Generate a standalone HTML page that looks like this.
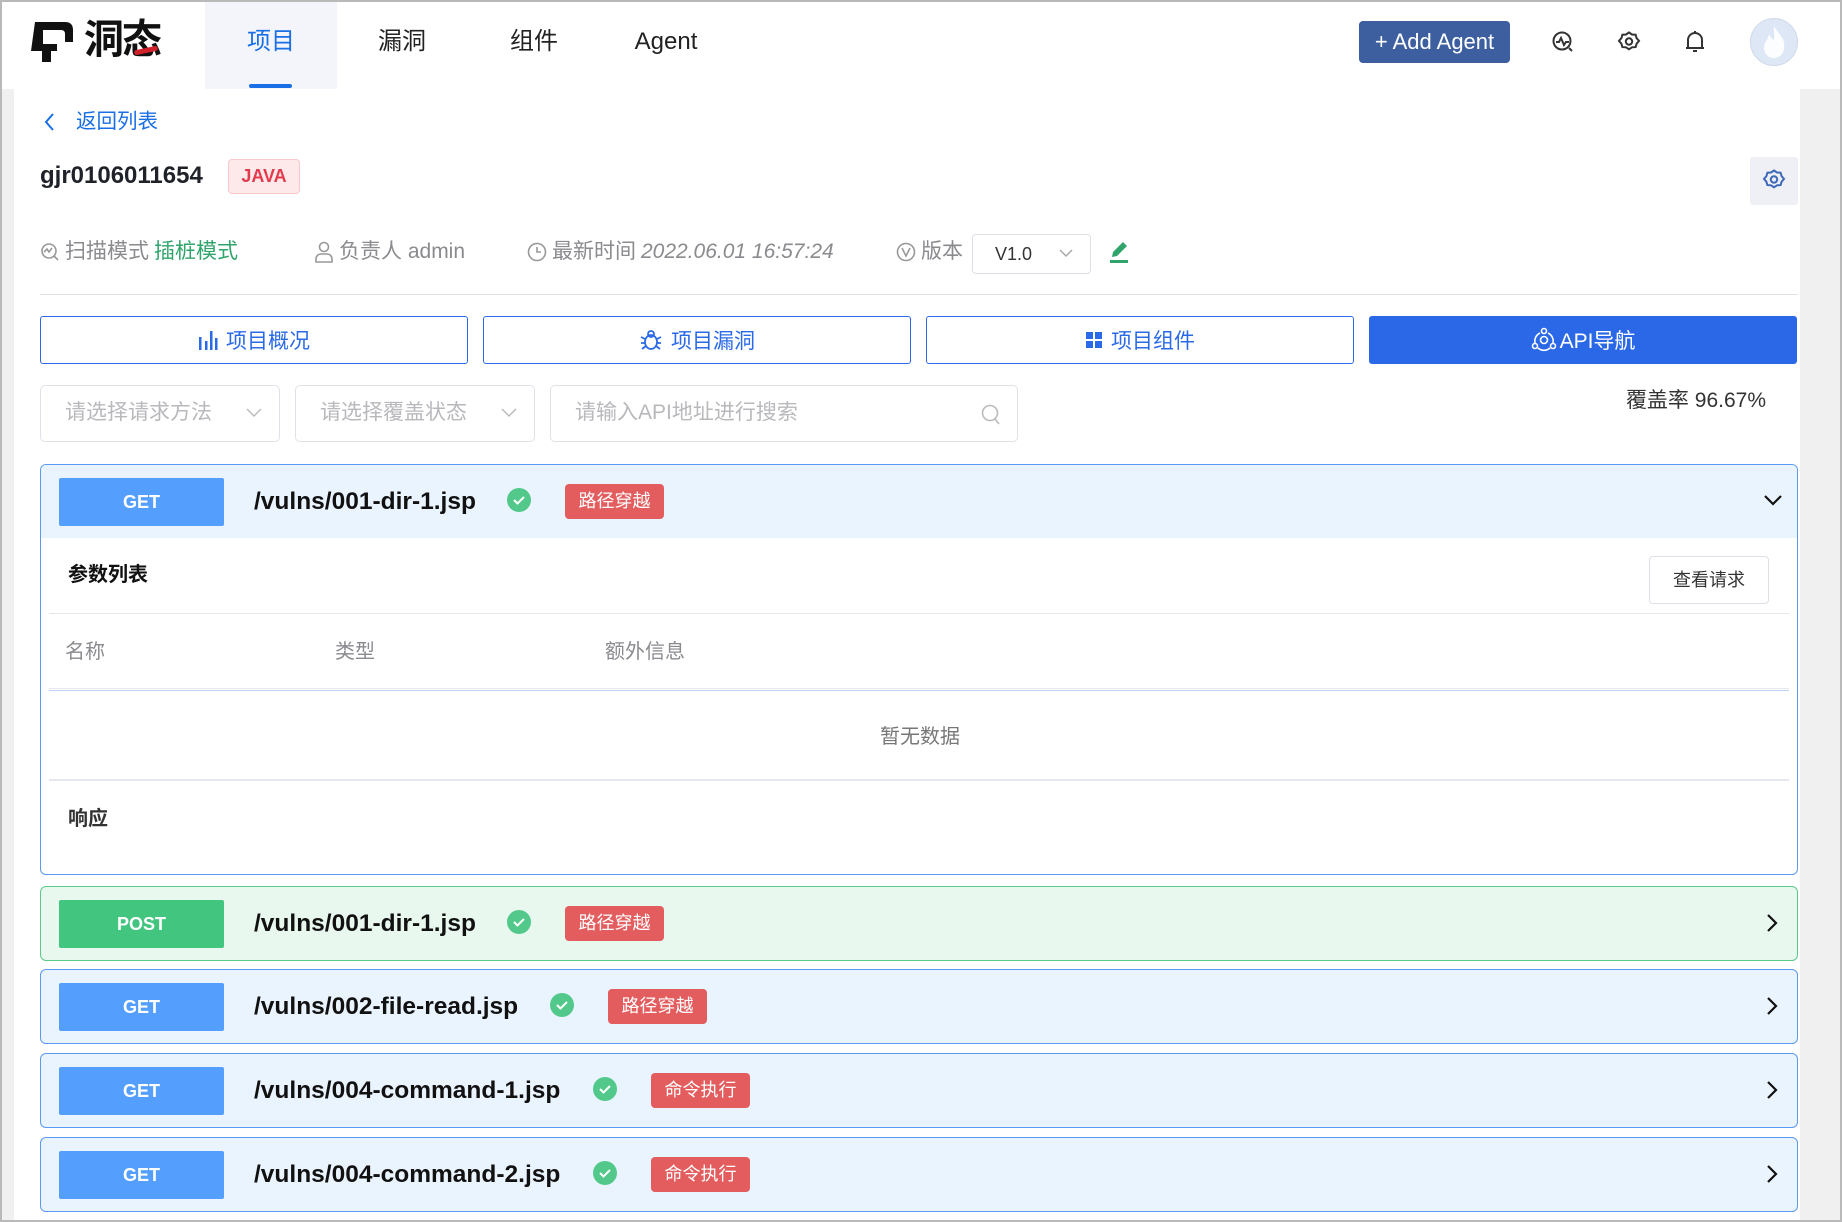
<!DOCTYPE html>
<html><head><meta charset="utf-8">
<style>
*{margin:0;padding:0;box-sizing:border-box}
body{width:1842px;height:1222px;position:relative;overflow:hidden;background:#f0f0f0;font-family:"Liberation Sans","Noto Sans CJK SC",sans-serif;color:#1f2329}
.a{position:absolute}
.frame{left:0;top:0;width:1842px;height:1222px;border:2px solid #b9b9b9;border-bottom:none;pointer-events:none}
.hdr{left:0;top:0;width:1842px;height:89px;background:#fff}
.nav{top:0;height:89px;width:132px;text-align:center;line-height:84px;font-size:24px;color:#222}
.main{left:14px;top:89px;width:1786px;height:1131px;background:#fff}
.tabb{top:316px;height:48px;width:428px;border:1.5px solid #2a6ae9;border-radius:3px;color:#2a6ae9;font-size:21px;display:flex;align-items:center;justify-content:center;gap:8px;background:#fff}
.sel{top:385px;height:57px;border:1.5px solid #e0e2e8;border-radius:5px;color:#b8b8bd;font-size:21px;padding-left:24px;line-height:54px}
.row{left:40px;width:1758px;height:75px;border:1.5px solid #5b9af0;border-radius:6px;background:#eaf4ff}
.badge{left:18px;top:13px;width:165px;height:48px;background:#549ffe;color:#fff;font-weight:bold;font-size:18px;text-align:center;line-height:48px;border-radius:2px}
.path{left:213px;top:0;line-height:73px;font-size:24.5px;font-weight:bold;color:#111}
.tag{top:19px;height:35px;width:99px;background:#e35d5f;color:#fff;font-size:18px;text-align:center;line-height:35px;border-radius:4px}
.chk{top:23px;width:24px;height:24px;border-radius:50%;background:#52c98a}
.chev{right:14px;top:26px}
.meta{top:240px;font-size:21px;color:#8a8a8f;line-height:24px;display:flex;align-items:center;gap:5px}
</style></head><body>
<div class="a hdr"></div>
<svg class="a" style="left:29px;top:20px" width="46" height="44" viewBox="0 0 46 44"><path d="M6 2 H36 Q44 2 44 10 V22 H36 V14 Q36 10 32 10 H14 V24 H28 V31 H22 V42 H13 V31 H2 Z" fill="#111"/></svg>
<div class="a" style="left:84px;top:14px;font-size:40px;font-weight:bold;color:#111;letter-spacing:-2px;line-height:52px">洞<span style="position:relative">态<span style="position:absolute;left:12px;top:30px;width:24px;height:5px;background:#d0202a;border-radius:3px;transform:rotate(-12deg)"></span></span></div>
<div class="a" style="left:205px;top:2px;width:132px;height:87px;background:#f4f5fa"></div>
<div class="a nav" style="left:205px;color:#1a6fe6">项目</div>
<div class="a" style="left:249px;top:84px;width:43px;height:4px;background:#1a6fe6;border-radius:2px"></div>
<div class="a nav" style="left:336px">漏洞</div>
<div class="a nav" style="left:468px">组件</div>
<div class="a nav" style="left:600px">Agent</div>
<div class="a" style="left:1359px;top:21px;width:151px;height:42px;background:#3d5fa0;border-radius:4px;color:#fff;font-size:22px;line-height:42px;text-align:center">+ Add Agent</div>
<svg class="a" style="left:1551px;top:30px" width="24" height="24" viewBox="0 0 24 24" fill="none" stroke="#333" stroke-width="2"><circle cx="11" cy="11" r="8.5"/><path d="M5 12h3l2-4 3 7 2-3h3M18 18l3 3"/></svg>
<svg class="a" style="left:1617px;top:30px" width="24" height="24" viewBox="0 0 24 24" fill="none" stroke="#333" stroke-width="2"><path d="M12 2.5l3 2 3.6.2 1 3.4 2.4 2.8-2.4 2.8-1 3.4-3.6.2-3 2-3-2-3.6-.2-1-3.4L2 10.9l2.4-2.8 1-3.4L9 4.5z"/><circle cx="12" cy="11.5" r="3.2"/></svg>
<svg class="a" style="left:1683px;top:29px" width="24" height="26" viewBox="0 0 24 26" fill="none" stroke="#333" stroke-width="2"><path d="M5 19V11a7 7 0 0114 0v8M3 19h18M12 2v2M10 22h4"/></svg>
<div class="a" style="left:1750px;top:18px;width:48px;height:48px;border-radius:50%;background:#dde7f5;border:1px solid #cfd9ea"></div>
<svg class="a" style="left:1760px;top:24px" width="28" height="36" viewBox="0 0 28 36"><path d="M14 2C18 10 26 14 24 24a10 10 0 01-20 0C4 18 8 16 9 10c2 4 3 5 5 6C15 10 13 6 14 2z" fill="#fff" opacity=".9"/></svg>
<div class="a main"></div>
<svg class="a" style="left:43px;top:112px" width="12" height="20" viewBox="0 0 12 20" fill="none" stroke="#1a6fe6" stroke-width="2"><path d="M10 2L3 10l7 8"/></svg>
<div class="a" style="left:76px;top:109px;font-size:20.5px;color:#1a6fe6;line-height:26px">返回列表</div>
<div class="a" style="left:40px;top:160px;font-size:24px;font-weight:bold;color:#1f2329;line-height:32px">gjr0106011654</div>
<div class="a" style="left:228px;top:159px;width:72px;height:35px;background:#fde9ea;border:1px solid #f9c9cc;border-radius:4px;color:#e33b4d;font-weight:bold;font-size:18px;text-align:center;line-height:33px">JAVA</div>
<div class="a" style="left:1750px;top:157px;width:48px;height:48px;background:#eef0f5;border-radius:3px"></div>
<svg class="a" style="left:1762px;top:168px" width="24" height="24" viewBox="0 0 24 24" fill="none" stroke="#3d68b8" stroke-width="2"><path d="M12 2.5l3 2 3.6.2 1 3.4 2.4 2.8-2.4 2.8-1 3.4-3.6.2-3 2-3-2-3.6-.2-1-3.4L2 10.9l2.4-2.8 1-3.4L9 4.5z"/><circle cx="12" cy="11.5" r="3.2"/></svg>
<div class="a meta" style="left:40px"><svg width="20" height="20" viewBox="0 0 20 20" fill="none" stroke="#999" stroke-width="1.6"><circle cx="9" cy="9" r="7"/><path d="M4 10l3-3 2 3 3-4M14 14l4 4"/></svg>扫描模式 <span style="color:#2fa56b">插桩模式</span></div>
<div class="a meta" style="left:314px"><svg width="20" height="22" viewBox="0 0 20 22" fill="none" stroke="#999" stroke-width="1.6"><circle cx="10" cy="6" r="4.5"/><path d="M2 21v-3a5 5 0 015-5h6a5 5 0 015 5v3z"/></svg>负责人 admin</div>
<div class="a meta" style="left:527px"><svg width="20" height="20" viewBox="0 0 20 20" fill="none" stroke="#999" stroke-width="1.6"><circle cx="10" cy="10" r="8.5"/><path d="M10 5v5h4"/></svg>最新时间 <i>2022.06.01 16:57:24</i></div>
<div class="a meta" style="left:896px"><svg width="20" height="20" viewBox="0 0 20 20" fill="none" stroke="#999" stroke-width="1.6"><circle cx="10" cy="10" r="8.5"/><path d="M6 6l4 8 4-8"/></svg>版本</div>
<div class="a" style="left:972px;top:234px;width:119px;height:40px;border:1px solid #dcdfe6;border-radius:4px;font-size:18px;color:#333;line-height:38px;padding-left:22px">V1.0<svg style="position:absolute;left:86px;top:14px" width="14" height="9" viewBox="0 0 14 9" fill="none" stroke="#aaa" stroke-width="1.5"><path d="M1 1l6 6 6-6"/></svg></div>
<svg class="a" style="left:1109px;top:240px" width="20" height="24" viewBox="0 0 20 24"><path d="M14 2l4 4-10 10-5 1 1-5z" fill="#2fa56b"/><rect x="1" y="20" width="18" height="3" fill="#2fa56b"/></svg>
<div class="a" style="left:40px;top:294px;width:1758px;height:1px;background:#e3e3e6"></div>
<div class="a tabb" style="left:40px"><svg width="20" height="22" viewBox="0 0 20 22" fill="#2a6ae9"><rect x="1" y="8" width="2.5" height="13"/><rect x="7" y="12" width="2.5" height="9"/><rect x="12" y="2" width="2.5" height="19"/><rect x="17" y="9" width="2.5" height="12"/></svg>项目概况</div>
<div class="a tabb" style="left:483px"><svg width="24" height="24" viewBox="0 0 24 24" fill="none" stroke="#2a6ae9" stroke-width="1.8"><ellipse cx="12" cy="14" rx="6" ry="7"/><circle cx="12" cy="6" r="3"/><path d="M2 9l4 2M2 15h4M3 21l4-3M22 9l-4 2M22 15h-4M21 21l-4-3"/></svg>项目漏洞</div>
<div class="a tabb" style="left:926px"><svg width="18" height="18" viewBox="0 0 18 18" fill="#2a6ae9"><rect x="1" y="1" width="7" height="7"/><rect x="10" y="1" width="7" height="7"/><rect x="1" y="10" width="7" height="7"/><rect x="10" y="10" width="7" height="7"/></svg>项目组件</div>
<div class="a tabb" style="left:1369px;background:#2a68e8;border-color:#2a68e8;color:#fff;gap:3px"><svg width="26" height="26" viewBox="0 0 26 26" fill="none" stroke="#fff" stroke-width="1.6"><circle cx="13" cy="13" r="3.5"/><circle cx="13" cy="4" r="2.5"/><circle cx="4" cy="19" r="2.5"/><circle cx="22" cy="19" r="2.5"/><path d="M9 6a9 9 0 00-5 10M17 6a9 9 0 015 10M7 21a9 9 0 0012 0"/></svg>API导航</div>
<div class="a sel" style="left:40px;width:240px">请选择请求方法<svg style="position:absolute;left:205px;top:22px" width="16" height="10" viewBox="0 0 16 10" fill="none" stroke="#bbb" stroke-width="1.5"><path d="M1 1l7 7 7-7"/></svg></div>
<div class="a sel" style="left:295px;width:240px">请选择覆盖状态<svg style="position:absolute;left:205px;top:22px" width="16" height="10" viewBox="0 0 16 10" fill="none" stroke="#bbb" stroke-width="1.5"><path d="M1 1l7 7 7-7"/></svg></div>
<div class="a sel" style="left:550px;width:468px">请输入API地址进行搜索<svg style="position:absolute;left:430px;top:18px" width="20" height="22" viewBox="0 0 20 22" fill="none" stroke="#bbb" stroke-width="1.6"><circle cx="9" cy="9" r="7.5"/><path d="M14 15l4 5"/></svg></div>
<div class="a" style="left:1560px;top:388px;width:206px;text-align:right;font-size:21px;color:#333;line-height:26px">覆盖率 96.67%</div>
<div class="a row" style="top:464px;height:411px;background:#fff;overflow:hidden">
 <div class="a" style="left:0;top:0;width:1758px;height:73px;background:#eaf4ff"></div>
 <div class="a badge">GET</div>
 <div class="a path">/vulns/001-dir-1.jsp</div>
 <div class="a chk" style="left:466px"><svg width="24" height="24" viewBox="0 0 24 24" fill="none" stroke="#fff" stroke-width="2"><path d="M7 12l3.5 3.5L17 9"/></svg></div>
 <div class="a tag" style="left:524px">路径穿越</div>
 <svg class="a chev" style="top:28px" width="20" height="14" viewBox="0 0 20 14" fill="none" stroke="#111" stroke-width="2.2"><path d="M2 3l8 8 8-8"/></svg>
 <div class="a" style="left:27px;top:97px;font-size:20px;font-weight:bold;color:#111;line-height:26px">参数列表</div>
 <div class="a" style="left:1608px;top:91px;width:120px;height:48px;border:1px solid #dcdfe6;border-radius:4px;font-size:18px;color:#333;text-align:center;line-height:46px">查看请求</div>
 <div class="a" style="left:8px;top:148px;width:1740px;height:1px;background:#e8e8ea"></div>
 <div class="a" style="left:24px;top:174px;font-size:20px;color:#8a8a90;line-height:26px">名称</div>
 <div class="a" style="left:294px;top:174px;font-size:20px;color:#8a8a90;line-height:26px">类型</div>
 <div class="a" style="left:564px;top:174px;font-size:20px;color:#8a8a90;line-height:26px">额外信息</div>
 <div class="a" style="left:8px;top:223px;width:1740px;height:1px;background:#e8e8ea"></div>
 <div class="a" style="left:8px;top:225px;width:1740px;height:1px;background:#bcd7fb"></div>
 <div class="a" style="left:0;top:259px;width:1758px;text-align:center;font-size:20px;color:#777;line-height:26px">暂无数据</div>
 <div class="a" style="left:8px;top:314px;width:1740px;height:2px;background:#e6e8f0"></div>
 <div class="a" style="left:27px;top:341px;font-size:20px;font-weight:bold;color:#333;line-height:26px">响应</div>
</div>
<div class="a row" style="top:886px;background:#e8f8ef;border-color:#5bc98a">
 <div class="a badge" style="background:#41c57f">POST</div>
 <div class="a path">/vulns/001-dir-1.jsp</div>
 <div class="a chk" style="left:466px"><svg width="24" height="24" viewBox="0 0 24 24" fill="none" stroke="#fff" stroke-width="2"><path d="M7 12l3.5 3.5L17 9"/></svg></div>
 <div class="a tag" style="left:524px">路径穿越</div>
 <svg class="a chev" style="right:18px" width="14" height="20" viewBox="0 0 14 20" fill="none" stroke="#111" stroke-width="2.2"><path d="M3 2l8 8-8 8"/></svg>
</div>
<div class="a row" style="top:969px">
 <div class="a badge">GET</div>
 <div class="a path">/vulns/002-file-read.jsp</div>
 <div class="a chk" style="left:509px"><svg width="24" height="24" viewBox="0 0 24 24" fill="none" stroke="#fff" stroke-width="2"><path d="M7 12l3.5 3.5L17 9"/></svg></div>
 <div class="a tag" style="left:567px">路径穿越</div>
 <svg class="a chev" style="right:18px" width="14" height="20" viewBox="0 0 14 20" fill="none" stroke="#111" stroke-width="2.2"><path d="M3 2l8 8-8 8"/></svg>
</div>
<div class="a row" style="top:1053px">
 <div class="a badge">GET</div>
 <div class="a path">/vulns/004-command-1.jsp</div>
 <div class="a chk" style="left:552px"><svg width="24" height="24" viewBox="0 0 24 24" fill="none" stroke="#fff" stroke-width="2"><path d="M7 12l3.5 3.5L17 9"/></svg></div>
 <div class="a tag" style="left:610px">命令执行</div>
 <svg class="a chev" style="right:18px" width="14" height="20" viewBox="0 0 14 20" fill="none" stroke="#111" stroke-width="2.2"><path d="M3 2l8 8-8 8"/></svg>
</div>
<div class="a row" style="top:1137px">
 <div class="a badge">GET</div>
 <div class="a path">/vulns/004-command-2.jsp</div>
 <div class="a chk" style="left:552px"><svg width="24" height="24" viewBox="0 0 24 24" fill="none" stroke="#fff" stroke-width="2"><path d="M7 12l3.5 3.5L17 9"/></svg></div>
 <div class="a tag" style="left:610px">命令执行</div>
 <svg class="a chev" style="right:18px" width="14" height="20" viewBox="0 0 14 20" fill="none" stroke="#111" stroke-width="2.2"><path d="M3 2l8 8-8 8"/></svg>
</div>
<div class="a" style="left:0;top:1220px;width:1842px;height:2px;background:#b9b9b9"></div>
<div class="a frame"></div>
</body></html>
